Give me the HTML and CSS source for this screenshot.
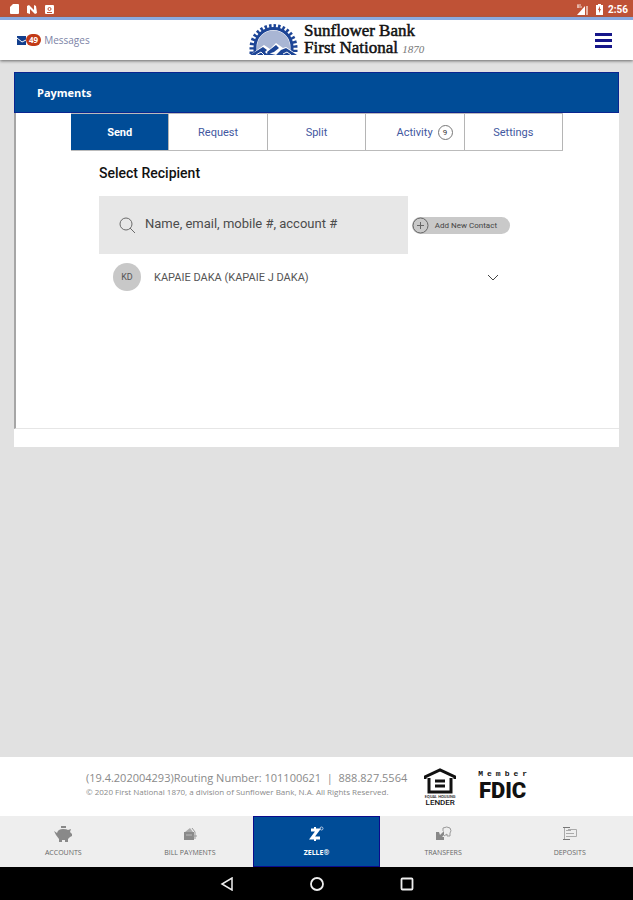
FILE: index.html
```html
<!DOCTYPE html>
<html lang="en">
<head>
  <meta charset="UTF-8" />
  <meta name="viewport" content="width=device-width, initial-scale=1">
  <title>Payments</title>
  <link rel="stylesheet" href="styles.css">
</head>
<body>
  <div class="status-bar">
    <div class="status-icons">
      <svg width="9" height="10" viewBox="0 0 9 10"><path fill="#fff" d="M3 0h5q1 0 1 1v8q0 1-1 1H1q-1 0-1-1V3z"/></svg>
      <svg width="10" height="9" viewBox="0 0 10 9"><path fill="#fff" d="M0 8V1l2-1 5 5V0l2 1 1 7-2 1-5-5v5z"/></svg>
      <svg width="9" height="9" viewBox="0 0 9 9"><rect width="9" height="9" rx="1" fill="#fff"/><circle cx="4.500" cy="4" r="1.500" fill="none" stroke="#bf5236"/><path stroke="#bf5236" d="M2 7.500h5"/></svg>
    </div>
    <div class="status-icons">
      <svg width="12" height="11" viewBox="0 0 12 11"><path fill="#fff" d="M9 2v9H1z"/><path fill="#e5b3a5" d="M10 2h2v9h-2z"/><path fill="none" stroke="#f2d5cc" d="M1 1h4M1 3h5M2 1v3"/></svg>
      <svg width="7" height="11" viewBox="0 0 7 11"><path fill="#fff" d="M2 0h3v1h2v10H0V1h2z"/><path fill="#bf5236" d="M4 2 2 6h1v3l2-4H4z"/></svg>
      <span>2:56</span>
    </div>
  </div>

  <header class="header">
    <a class="messages" href="#">
      <svg width="9" height="9" viewBox="0 0 9 9"><rect width="9" height="9" fill="#123f8e"/><path fill="none" stroke="#fff" d="m0 2 5 4 4-2"/></svg>
      <span class="count">49</span>
      <span>Messages</span>
    </a>
    <a class="brand" href="#">
      <svg width="49" height="32" viewBox="0 0 49 32">
        <path fill="none" stroke="#1d4596" stroke-width="3" d="M6 30V23a18.500 18.500 0 0 1 37 0v7"/>
        <path fill="none" stroke="#1d4596" stroke-width="5" stroke-dasharray="2.400 2" d="M3 30V24a21.500 21.500 0 0 1 43 0v6"/>
        <path fill="#a9b6d4" d="M8 30v-7a16.500 16.500 0 0 1 33 0v7z"/>
        <path fill="#fff" d="m0 32 15-11 6 4 6-6 7 5 3-1 12 8v1z"/>
        <path fill="#1d4596" d="m1 31 13-8 4 3-2 2 3 3zM18 28l9-7 3 3-5 4-6 2zM27 31l5-5 5-2 11 7zM15 31l4-2 8 2z"/>
        <path fill="none" stroke="#fff" d="m7 31 5-3 3 3M34 30l4-2 4 3"/>
      </svg>
      <span class="brand-name">Sunflower Bank<br>First National <i>1870</i></span>
    </a>
    <button class="menu-button" type="button" aria-label="Menu">
      <svg width="17" height="15" viewBox="0 0 17 15"><path fill="#16168a" d="M0 0h17v3H0zM0 6h17v3H0zM0 12h17v3H0z"/></svg>
    </button>
  </header>

  <main class="content">
    <section class="card">
      <h1 class="card-title">Payments</h1>
      <div class="panel">
        <nav class="tabs">
          <button type="button" class="tab active">Send</button>
          <button type="button" class="tab">Request</button>
          <button type="button" class="tab">Split</button>
          <button type="button" class="tab with-badge">Activity <span class="badge">9</span></button>
          <button type="button" class="tab">Settings</button>
        </nav>
        <div class="recipient">
          <h2>Select Recipient</h2>
          <div class="search-row">
            <label class="search">
              <svg width="17" height="17" viewBox="0 0 17 17"><circle cx="7" cy="7" r="6" fill="none" stroke="#6a6a6a"/><path stroke="#6a6a6a" d="m11 11 5 5"/></svg>
              <input type="text" aria-label="Recipient" placeholder="Name, email, mobile #, account #">
            </label>
            <button type="button" class="add-contact">
              <svg width="17" height="17" viewBox="0 0 17 17"><circle cx="8.500" cy="8.500" r="7.500" fill="none" stroke="#666"/><path stroke="#666" d="M5 8.500h7M8.500 5v7"/></svg>
              Add New Contact
            </button>
          </div>
          <button type="button" class="contact">
            <span class="avatar">KD</span>
            <span class="contact-name">KAPAIE DAKA (KAPAIE J DAKA)</span>
            <svg width="12" height="7" viewBox="0 0 12 7"><path fill="none" stroke="#444" d="m1 1 5 5 5-5"/></svg>
          </button>
        </div>
      </div>
    </section>
  </main>

  <footer class="footer">
    <div class="legal">
      <p class="routing">(19.4.202004293)Routing Number: 101100621 &nbsp;|&nbsp; 888.827.5564</p>
      <p class="copyright">© 2020 First National 1870, a division of Sunflower Bank, N.A. All Rights Reserved.</p>
    </div>
    <div class="lender">
      <svg width="32" height="26" viewBox="0 0 32 26"><path fill="none" stroke="#111" stroke-width="3" d="M5 10v14h22V10M1 11V9l15-7 15 7v2"/><path stroke="#111" stroke-width="3" d="M11 13h10M11 18h10"/></svg>
      <span class="equal">EQUAL HOUSING</span>
      <span>LENDER</span>
    </div>
    <div class="fdic">
      <span class="member">Member</span>
      <b>FDIC</b>
    </div>
  </footer>

  <nav class="bottom-nav">
    <a href="#">
      <svg width="19" height="16" viewBox="0 0 19 16"><path fill="#898989" d="M7 0h5v2H7zM0 5l3 2q1-4 6-4 4 0 5 1l3-1-1 3 2 2v2l-2 1-2 2v3h-3v-2H8v2H5v-3L2 9z"/></svg>
      <span>ACCOUNTS</span>
    </a>
    <a href="#">
      <svg width="14" height="16" viewBox="0 0 14 16"><path fill="#8a8a8a" d="M1 6h10v8H1z"/><path fill="#aaa" d="m2 6 5-4 3 4z"/><path fill="none" stroke="#999" d="M9 2l3 4v7M10 10h4"/><path stroke="#bbb" d="M3 9h6"/></svg>
      <span>BILL PAYMENTS</span>
    </a>
    <a href="#" class="active">
      <svg width="15" height="16" viewBox="0 0 15 16"><path fill="none" stroke="#fff" stroke-width="3" d="M2 4h7l-6 8h8"/><path stroke="#fff" stroke-width="2" d="M6 1v3M6 12v3"/><circle cx="12.500" cy="2.500" r="1.500" fill="none" stroke="#b9cbe5"/></svg>
      <span>ZELLE®</span>
    </a>
    <a href="#">
      <svg width="17" height="16" viewBox="0 0 17 16"><path fill="#888" d="M1 6h3l1 3 4-4v4l-2 2h2v3H1z"/><path fill="none" stroke="#999" d="M8 5V2q4-2 7 0 2 3 0 5v3h-3V8l-3 2"/></svg>
      <span>TRANSFERS</span>
    </a>
    <a href="#">
      <svg width="16" height="16" viewBox="0 0 16 16"><path fill="none" stroke="#777" d="M1 1.500h7M1 13.500h7"/><path fill="none" stroke="#aaa" d="M2.500 2v11M6 3.500h8.500v7H6M4 7.500h8M4 10.500h5M4 4.500h5"/></svg>
      <span>DEPOSITS</span>
    </a>
  </nav>

  <div class="system-nav">
    <button type="button" aria-label="Back"><svg width="14" height="14" viewBox="0 0 14 14"><path fill="none" stroke="#eee" stroke-width="1.500" d="M12 1v12L2 7z"/></svg></button>
    <button type="button" aria-label="Home"><svg width="14" height="14" viewBox="0 0 14 14"><circle cx="7" cy="7" r="6" fill="none" stroke="#eee" stroke-width="1.800"/></svg></button>
    <button type="button" aria-label="Recents"><svg width="14" height="14" viewBox="0 0 14 14"><rect x="1.500" y="1.500" width="11" height="11" rx="1" fill="none" stroke="#eee" stroke-width="1.800"/></svg></button>
  </div>
</body>
</html>
```

FILE: styles.css
```css
* {
  box-sizing: border-box;
}
body {
  margin: 0;
  min-height: 100vh;
  display: flex;
  flex-direction: column;
  background: #e1e1e1;
  font-family: Roboto, "Open Sans", sans-serif;
}
h1, h2, p {
  margin: 0;
}
a {
  color: inherit;
  text-decoration: none;
}
button {
  border: 0;
  padding: 0;
  background: none;
  font-family: inherit;
  color: inherit;
  cursor: pointer;
}
svg {
  display: block;
  flex: none;
}

/* top bars */
.status-bar {
  display: flex;
  justify-content: space-between;
  height: 17px;
  padding: 1px 5px 0 10px;
  background: #bf5236;
  color: #fff;
  font-size: 10px;
  font-weight: 700;
}
.status-icons {
  display: flex;
  align-items: center;
  gap: 8px;
}
.status-icons span {
  margin-left: -3px;
}
.header {
  display: grid;
  grid-template-columns: 39% auto 1fr;
  align-items: center;
  height: 43px;
  padding: 0 21px 0 17px;
  border-top: 3px solid #8aaae0;
  background: #fff;
  box-shadow: 0 1px 3px #666;
}
.messages {
  display: flex;
  align-items: center;
  color: #7c83a6;
  font: 10px "Open Sans", sans-serif;
}
.count {
  margin-right: 3px;
  padding: 0 3px;
  border-radius: 7px;
  background: #c23a17;
  color: #fff;
  font-size: 8px;
  font-weight: 700;
  line-height: 12px;
}
.brand {
  display: flex;
  align-items: center;
  gap: 6px;
}
.brand-name {
  color: #111;
  font: 17px/17px "Liberation Serif", serif;
  -webkit-text-stroke: 0.5px #111;
  white-space: nowrap;
}
.brand-name i {
  color: #777;
  font-size: 11px;
  -webkit-text-stroke: 0;
}
.menu-button {
  justify-self: end;
}

/* payments card */
.content {
  flex: 1;
  padding: 12px 14px;
}
.card {
  padding-bottom: 18px;
  background: #fff;
}
.card-title {
  padding: 0 22px;
  border: 1px solid #0a2590;
  background: #004c97;
  color: #fff;
  font: bold 11px/39px "Open Sans", sans-serif;
}
.panel {
  min-height: 316px;
  padding: 0 56px 0 55px;
  border-left: 2px solid #a6a6a6;
  border-bottom: 1px solid #e6e6e6;
}
.tabs {
  display: grid;
  grid-template-columns: repeat(5, 1fr);
  border: 1px solid #bbb;
  border-width: 1px 0;
}
.tab {
  height: 36px;
  border-right: 1px solid #b5b5b5;
  color: #4257a0;
  font-size: 11px;
}
.tab.active {
  background: #004c97;
  color: #fff;
  font-weight: 700;
}
.with-badge {
  display: flex;
  align-items: center;
  justify-content: flex-end;
  gap: 5px;
  padding-right: 11px;
}
.badge {
  width: 15px;
  border: 1px solid #777;
  border-radius: 50%;
  color: #333;
  font-size: 8px;
  line-height: 13px;
}
.recipient {
  padding: 12px 53px 0 28px;
}
.recipient h2 {
  color: #111;
  font-size: 14px;
  font-weight: 500;
  line-height: 20px;
}
.search-row {
  display: flex;
  align-items: center;
  gap: 4px;
  margin-top: 13px;
}
.search {
  flex: 1;
  display: flex;
  align-items: center;
  gap: 9px;
  height: 58px;
  padding-left: 20px;
  background: #e7e7e7;
}
.search input {
  flex: 1;
  min-width: 0;
  padding: 0 0 4px;
  border: 0;
  outline: 0;
  background: none;
  color: #333;
  font: 13px Roboto, sans-serif;
}
.search input::placeholder {
  color: #4c4c4c;
}
.add-contact {
  display: flex;
  align-items: center;
  gap: 6px;
  padding-right: 13px;
  border-radius: 9px;
  background: #c9c9c9;
  color: #444;
  font-size: 8px;
  white-space: nowrap;
}
.contact {
  display: flex;
  align-items: center;
  width: 100%;
  gap: 13px;
  padding: 9px 11px 9px 14px;
}
.avatar {
  width: 28px;
  border-radius: 50%;
  background: #c8c8c8;
  color: #555;
  font-size: 9px;
  line-height: 28px;
}
.contact-name {
  flex: 1;
  color: #555;
  font-size: 11px;
  text-align: left;
}

/* footer */
.footer {
  display: flex;
  align-items: center;
  justify-content: center;
  height: 59px;
  padding-right: 16px;
  background: #fff;
  color: #111;
}
.legal {
  margin-right: 16px;
  padding-bottom: 4px;
  color: #8a8a8a;
  font-family: "Open Sans", sans-serif;
  white-space: nowrap;
}
.routing {
  font-size: 11px;
  line-height: 14px;
}
.copyright {
  font-size: 8px;
  line-height: 13px;
}
.lender {
  display: flex;
  flex-direction: column;
  align-items: center;
  width: 34px;
  margin-right: 17px;
  font-size: 8px;
  font-weight: 500;
  line-height: 7px;
}
.equal {
  font-size: 4px;
  line-height: 5px;
  white-space: nowrap;
}
.fdic {
  display: flex;
  flex-direction: column;
  align-items: center;
}
.fdic b {
  font: 900 22px/26px Roboto, sans-serif;
}
.member {
  padding-left: 4px;
  font: bold 8px/9px "Liberation Mono", monospace;
  letter-spacing: 4px;
}

.bottom-nav {
  display: grid;
  grid-template-columns: repeat(5, 1fr);
  height: 51px;
  background: #eee;
  color: #666;
  font: 7px/10px "Open Sans", sans-serif;
}
.bottom-nav a {
  display: flex;
  flex-direction: column;
  align-items: center;
  gap: 6px;
  padding-top: 10px;
}
.bottom-nav .active {
  padding-top: 9px;
  border: 1px solid #0b0b8c;
  background: #004c97;
  color: #fff;
  font-weight: 700;
}
.system-nav {
  display: flex;
  align-items: center;
  justify-content: center;
  gap: 76px;
  height: 33px;
  background: #000;
}
```
